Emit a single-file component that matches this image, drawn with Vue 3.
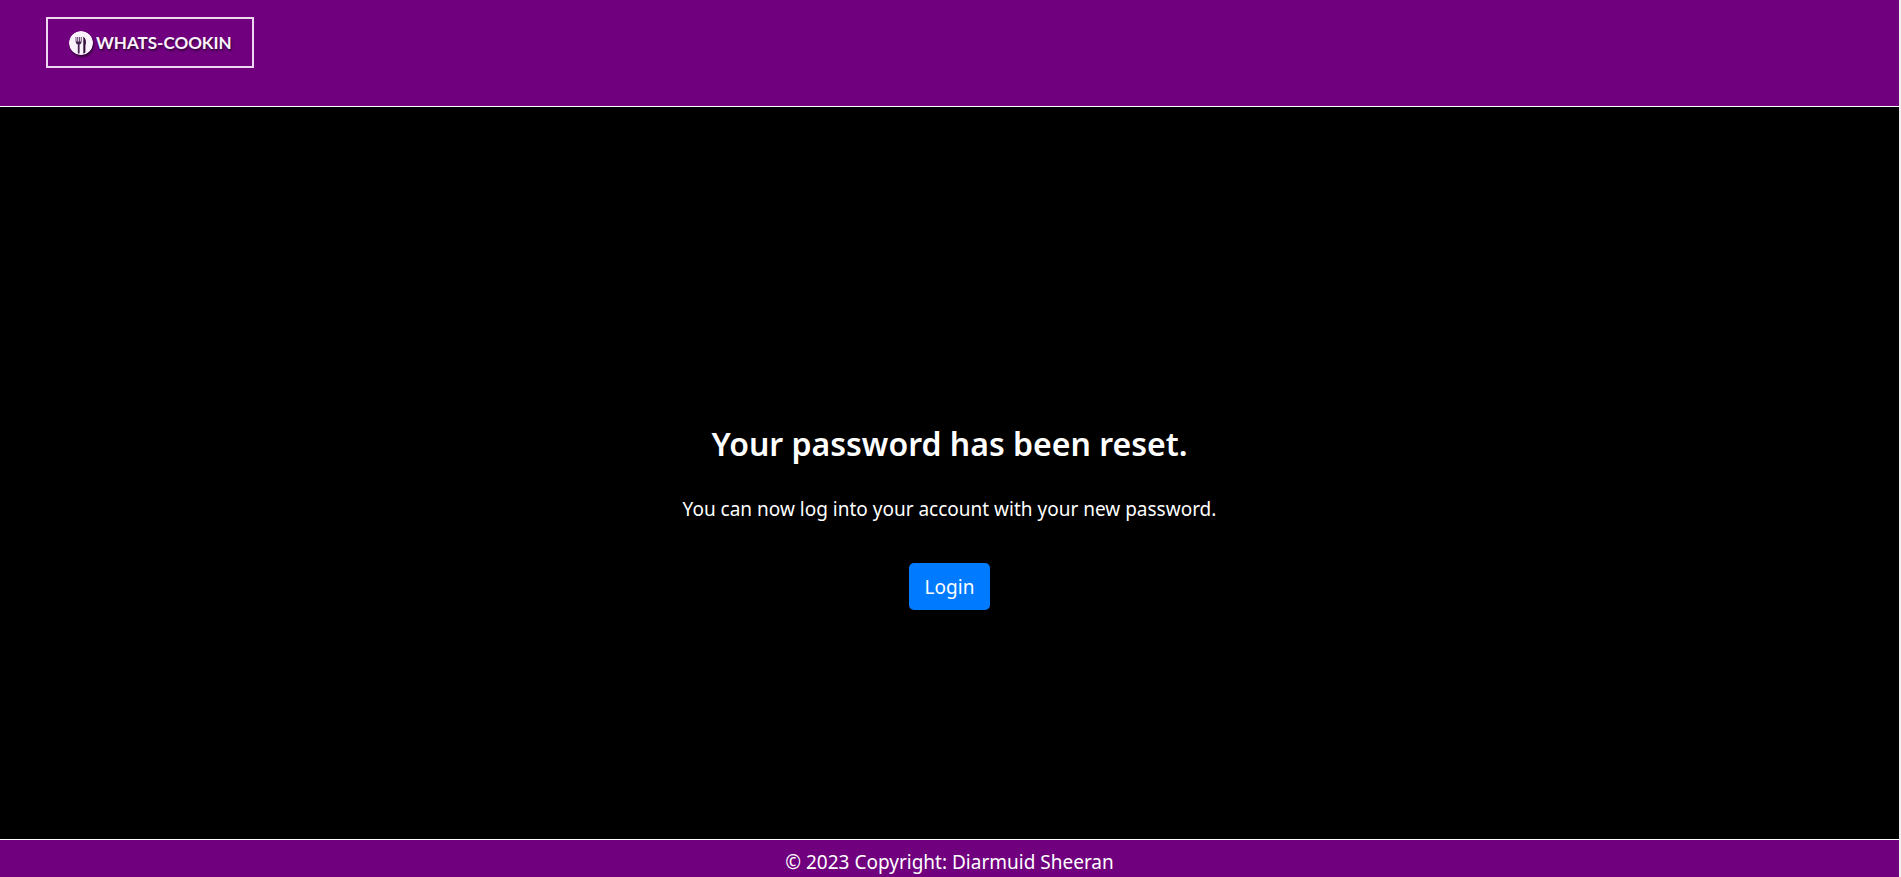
<script setup>
const message = {
  title: 'Your password has been reset.',
  body: 'You can now log into your account with your new password.'
}
</script>

<template>
  <div class="page">
    <header class="header">
      <a class="logo" href="#" aria-label="Whats-Cookin home">
        <svg class="logo-mark" viewBox="0 0 24 24" aria-hidden="true">
          <circle cx="12" cy="12" r="12" fill="#fbf3fc" />
          <path d="M6.6 6V10.5Q6.6 13 8.8 13.4V22.5H10.6V13.4Q12.6 13 12.6 10.5V6H11.8V10.6H10.9V6H10.1V10.6H9.2V6H8.3V10.6H7.4V6Z" fill="#4b2354" />
          <path d="M14.3 5.5C17 7.5 17.6 11 16.4 14.5V21.5L14.3 22.8Z" fill="#32113a" />
        </svg>
        <span class="logo-text">WHATS-COOKIN</span>
      </a>
    </header>

    <main class="content">
      <h2 class="title">{{ message.title }}</h2>
      <p class="text">{{ message.body }}</p>
      <a class="login" href="#login">Login</a>
    </main>

    <footer class="footer">© 2023 Copyright: Diarmuid Sheeran</footer>
  </div>
</template>

<style>
body {
  margin: 0;
  background: #000;
}
</style>

<style scoped>
.page {
  box-sizing: border-box;
  min-height: 100vh;
  display: flex;
  flex-direction: column;
  border-right: 2px solid #f1f1f1;
  background: #000;
  color: #fff;
  font-family: "Segoe UI", "Noto Sans", "Open Sans", sans-serif;
  font-size: 19px;
  line-height: 30px;
}

.header {
  display: flex;
  padding: 17px 46px 38px;
  border-bottom: 1px solid #fff;
  background: #70007e;
}

.logo {
  display: flex;
  align-items: center;
  gap: 3px;
  padding: 12px 20px 11px 21px;
  border: 2px solid #efd9f2;
  color: #fbf3fc;
  text-decoration: none;
}

.logo-mark {
  width: 24px;
  height: 24px;
  border-radius: 50%;
  box-shadow: 1px 2px 2px #35063c;
}

.logo-text {
  font: 700 17px/24px Lato, sans-serif;
  text-shadow: 1px 2px 2px #35063c;
}

.content {
  flex: 1;
  display: flex;
  flex-direction: column;
  align-items: center;
  justify-content: center;
  padding-top: 86px;
}

.title {
  margin: 0;
  font-size: 32px;
  line-height: 44px;
  font-weight: 600;
}

.text {
  margin: 28px 0 39px;
}

.login {
  padding: 9px 16px 8px;
  border-radius: 5px;
  background: #007bff;
  color: #fff;
  text-decoration: none;
}

.footer {
  padding: 7px 0 0;
  border-top: 1px solid #fff;
  background: #70007e;
  text-align: center;
}
</style>
